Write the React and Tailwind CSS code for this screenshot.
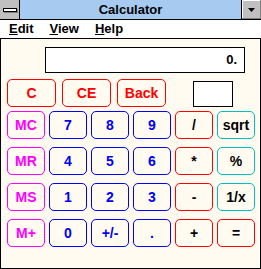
const keyStyles = {
  red: "border-[#ff0000] text-[#ff0000]",
  redOp: "border-[#ff0000] text-black",
  mag: "border-[#ff00ff] text-[#ff00ff]",
  blue: "border-[#0000ff] text-[#0000ff]",
  cyan: "border-[#00c0c0] text-black",
};

function Key({ label, kind, wide }) {
  return (
    <button
      type="button"
      className={`${wide ? "w-[49px]" : "w-[38px]"} h-[28px] rounded-[5px] border bg-transparent flex items-center justify-center text-[14px] font-bold leading-none ${keyStyles[kind]}`}
    >
      {label}
    </button>
  );
}

const rows = [
  [["MC", "mag"], ["7", "blue"], ["8", "blue"], ["9", "blue"], ["/", "redOp"], ["sqrt", "cyan"]],
  [["MR", "mag"], ["4", "blue"], ["5", "blue"], ["6", "blue"], ["*", "redOp"], ["%", "cyan"]],
  [["MS", "mag"], ["1", "blue"], ["2", "blue"], ["3", "blue"], ["-", "redOp"], ["1/x", "cyan"]],
  [["M+", "mag"], ["0", "blue"], ["+/-", "blue"], [".", "blue"], ["+", "redOp"], ["=", "redOp"]],
];

export default function App() {
  return (
    <div className="w-[261px] h-[269px] flex flex-col font-['Liberation_Sans',Arial,sans-serif] select-none">
      {/* title bar */}
      <div className="h-[20px] flex border-b border-black bg-[#a6caf0]">
        <div className="w-[20px] h-full border-r border-black bg-[#c0c0c0] flex items-center justify-center">
          <div className="w-[14px] h-[4px] bg-white border border-black shadow-[1px_1px_0_#808080]" />
        </div>
        <div className="flex-1 flex items-center justify-center text-[13px] font-bold text-black">
          Calculator
        </div>
        <div className="w-[20px] h-full border-l border-black bg-[#c0c0c0] flex items-center justify-center shadow-[inset_-1px_-1px_0_#808080,inset_1px_1px_0_#ffffff]">
          <svg width="7" height="4" viewBox="0 0 7 4">
            <path d="M0 0h7L3.5 4z" fill="#000" />
          </svg>
        </div>
      </div>

      {/* menu bar */}
      <div className="h-[19px] flex items-center bg-white border-b border-black text-[13px] font-bold text-black">
        <span className="ml-[9px]"><span className="underline">E</span>dit</span>
        <span className="ml-[16px]"><span className="underline">V</span>iew</span>
        <span className="ml-[16px]"><span className="underline">H</span>elp</span>
      </div>

      {/* body */}
      <div className="flex-1 flex flex-col border-x border-b border-black bg-[#fffbf0]">
        <div className="mt-[8px] ml-[44px] w-[200px] h-[26px] border border-black bg-white flex items-center justify-end pr-[7px] text-[13px] font-bold">
          0.
        </div>

        <div className="mt-[6px] pl-[6px] flex items-start gap-[6px]">
          <Key label="C" kind="red" wide />
          <Key label="CE" kind="red" wide />
          <Key label="Back" kind="red" wide />
          <div className="ml-[21px] mt-[2px] w-[40px] h-[26px] border border-black bg-white" />
        </div>

        <div className="mt-[4px] flex flex-col gap-[8px]">
          {rows.map((row, i) => (
            <div key={i} className="pl-[6px] flex gap-[4px]">
              {row.map(([label, kind]) => (
                <Key key={label} label={label} kind={kind} />
              ))}
            </div>
          ))}
        </div>
      </div>
    </div>
  );
}
